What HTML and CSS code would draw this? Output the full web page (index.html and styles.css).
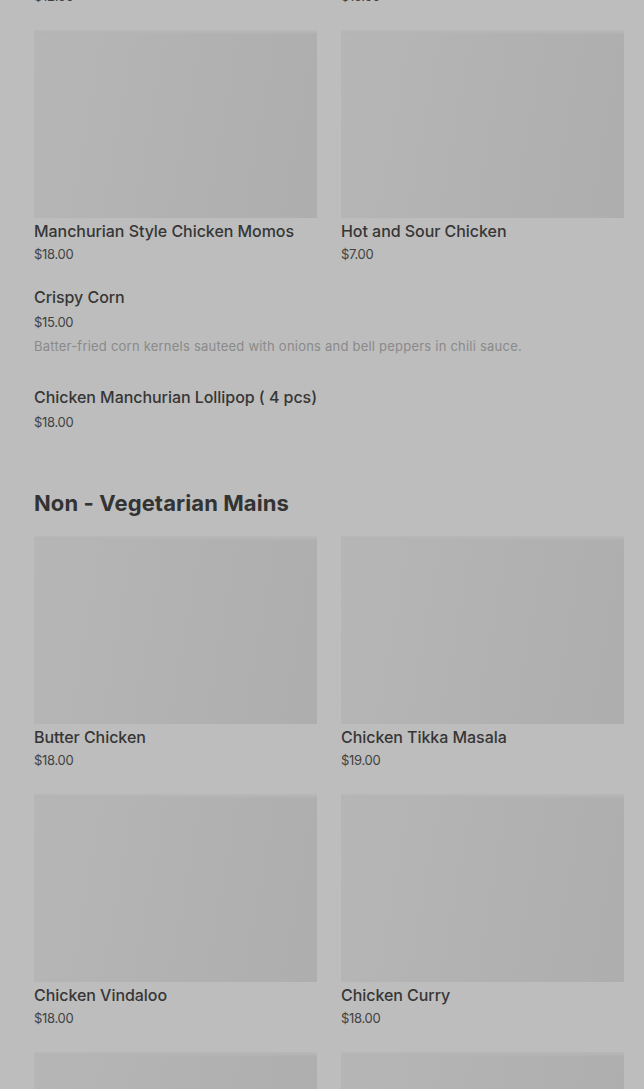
FILE: index.html
```html
<!DOCTYPE html>
<html lang="en">
<head>
    <meta charset="UTF-8">
    <meta name="viewport" content="width=device-width, initial-scale=1.0">
    <title>Menu</title>
    <link rel="stylesheet" href="styles.css">
</head>
<body>
    <div class="menu">
        <!-- bagian atas: sisa dari kategori sebelumnya -->
        <div class="grid grid-top">
            <div class="card">
                <div class="thumb"></div>
                <div class="name">Spring Rolls</div>
                <div class="price">$12.00</div>
            </div>
            <div class="card">
                <div class="thumb"></div>
                <div class="name">Chilli Chicken</div>
                <div class="price">$15.00</div>
            </div>
            <div class="card">
                <div class="thumb"></div>
                <div class="name">Manchurian Style Chicken Momos</div>
                <div class="price">$18.00</div>
            </div>
            <div class="card">
                <div class="thumb"></div>
                <div class="name">Hot and Sour Chicken</div>
                <div class="price">$7.00</div>
            </div>
        </div>

        <div class="list">
            <div class="item">
                <div class="name">Crispy Corn</div>
                <div class="price">$15.00</div>
                <div class="desc">Batter-fried corn kernels sauteed with onions and bell peppers in chili sauce.</div>
            </div>
            <div class="item">
                <div class="name">Chicken Manchurian Lollipop ( 4 pcs)</div>
                <div class="price">$18.00</div>
            </div>
        </div>

        <h2 class="section-title">Non - Vegetarian Mains</h2>
        <div class="grid">
            <div class="card">
                <div class="thumb"></div>
                <div class="name">Butter Chicken</div>
                <div class="price">$18.00</div>
            </div>
            <div class="card">
                <div class="thumb"></div>
                <div class="name">Chicken Tikka Masala</div>
                <div class="price">$19.00</div>
            </div>
            <div class="card">
                <div class="thumb"></div>
                <div class="name">Chicken Vindaloo</div>
                <div class="price">$18.00</div>
            </div>
            <div class="card">
                <div class="thumb"></div>
                <div class="name">Chicken Curry</div>
                <div class="price">$18.00</div>
            </div>
            <div class="card">
                <div class="thumb"></div>
                <div class="name">Lamb Rogan Josh</div>
                <div class="price">$20.00</div>
            </div>
            <div class="card">
                <div class="thumb"></div>
                <div class="name">Goat Curry</div>
                <div class="price">$20.00</div>
            </div>
        </div>
    </div>
</body>
</html>
```

FILE: styles.css
```css
html, body {
    margin: 0;
    background: #bdbdbd;
}
body {
    font-family: Inter, "Liberation Sans", sans-serif;
    color: #333;
    overflow: hidden;
    height: 1089px;
}
.menu {
    padding: 0 20px 0 34px;
    margin-top: -228px;
}
.grid {
    display: grid;
    grid-template-columns: 283px 283px;
    column-gap: 24px;
    row-gap: 24px;
}
.thumb {
    height: 188px;
    background: linear-gradient(180deg, #b8b8b8 0px, #b4b4b4 3px, rgba(0,0,0,0) 4px),
                linear-gradient(100deg, #b6b6b6 0%, #b2b2b2 45%, #aeaeae 100%);
    margin-bottom: 3px;
}
.name {
    font-size: 16px;
    font-weight: 500;
    line-height: 20px;
    color: #363636;
    letter-spacing: -0.05px;
}
.price {
    font-size: 13px;
    line-height: 20px;
    color: #424242;
    margin-top: 3px;
    letter-spacing: -0.3px;
}
.list {
    padding-top: 23px;
}
.item {
    margin-bottom: 31px;
}
.item .price {
    margin-top: 5px;
}
.desc {
    font-size: 13px;
    line-height: 20px;
    color: #8a8a8a;
    margin-top: 4px;
    letter-spacing: 0.22px;
}
.section-title {
    font-size: 22px;
    font-weight: 700;
    line-height: 28px;
    letter-spacing: 0.1px;
    color: #333;
    margin: 57px 0 19px;
}
```
